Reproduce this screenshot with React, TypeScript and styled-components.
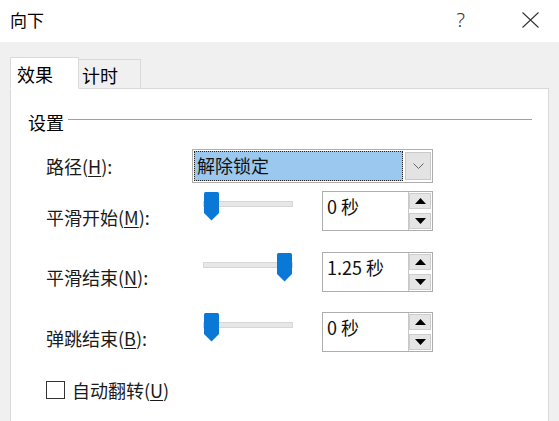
import styled, { createGlobalStyle } from 'styled-components';

const GlobalStyle = createGlobalStyle`
  html, body {
    margin: 0;
    padding: 0;
    background: #f0f0f0;
  }
  body {
    font-family: "Noto Sans CJK SC", "Noto Sans", sans-serif;
    color: #000;
  }
`;

const Window = styled.div`
  width: 559px;
  height: 421px;
  display: flex;
  flex-direction: column;
  overflow: hidden;
  background: #f0f0f0;
`;

const TitleBar = styled.div`
  height: 42px;
  flex: none;
  display: flex;
  align-items: center;
  padding: 0 20px 2px 10px;
  background: #fff;
  box-sizing: border-box;
`;

const Title = styled.div`
  flex: 1;
  font-size: 17px;
  line-height: 24px;
`;

const TitleButtons = styled.div`
  display: flex;
  align-items: center;
  gap: 57px;
  color: #333;
`;

const Help = styled.span`
  font-family: "Noto Sans", sans-serif;
  font-size: 20px;
  line-height: 24px;
  font-weight: 300;
`;

const Body = styled.div`
  flex: 1;
  display: flex;
  flex-direction: column;
  padding: 15px 10px 0 10px;
`;

const Tabs = styled.div`
  display: flex;
  align-items: flex-end;
  position: relative;
  z-index: 1;
  margin-bottom: -1px;
`;

const Tab = styled.div<{ $active?: boolean }>`
  box-sizing: border-box;
  font-size: 18px;
  line-height: 24px;
  border: 1px solid #d9d9d9;
  border-bottom: ${(p) => (p.$active ? '1px solid #fff' : 'none')};
  background: ${(p) => (p.$active ? '#fff' : '#f0f0f0')};
  height: ${(p) => (p.$active ? '32px' : '29px')};
  width: ${(p) => (p.$active ? '69px' : '63px')};
  padding: ${(p) => (p.$active ? '4px 0 0 6px' : '3px 0 0 3px')};
  margin-left: ${(p) => (p.$active ? '0' : '-1px')};
  margin-bottom: ${(p) => (p.$active ? '0' : '1px')};
`;

const Panel = styled.div`
  flex: 1;
  background: #fff;
  border: 1px solid #d9d9d9;
  border-bottom: none;
  padding: 21px 16px 0 17px;
`;

const GroupHeader = styled.div`
  display: flex;
  align-items: center;
  font-size: 18px;
  line-height: 24px;
`;

const GroupLine = styled.div`
  flex: 1;
  height: 1px;
  background: #a0a0a0;
  margin: 0 0 5px 4px;
`;

const Form = styled.div`
  display: flex;
  flex-direction: column;
  margin: 15px 0 0 18px;
`;

const Row = styled.div<{ $top: number; $center?: boolean }>`
  display: flex;
  align-items: ${(p) => (p.$center ? 'center' : 'flex-start')};
  margin-top: ${(p) => p.$top}px;
`;

const Label = styled.div<{ $offset?: number }>`
  width: 146px;
  flex: none;
  font-size: 18px;
  line-height: 24px;
  padding-top: ${(p) => p.$offset ?? 0}px;
  color: #1a1a1a;
`;

const Key = styled.span`
  text-decoration: underline;
  text-underline-offset: 2px;
`;

const Combo = styled.div`
  box-sizing: border-box;
  width: 241px;
  height: 34px;
  border: 1px solid #adadad;
  padding: 1px;
  display: flex;
  gap: 2px;
  background: #fff;
`;

const ComboValue = styled.div`
  flex: 1;
  box-sizing: border-box;
  background: #9bc8ee;
  border: 1px dotted #222;
  font-size: 18px;
  line-height: 26px;
  padding-left: 2px;
  color: #111;
`;

const ComboButton = styled.div`
  box-sizing: border-box;
  width: 26px;
  margin: 1px 0;
  background: #e3e3e3;
  border: 1px solid #cacaca;
  display: flex;
  align-items: center;
  justify-content: center;
`;

const SliderTrackArea = styled.div`
  position: relative;
  width: 90px;
  height: 29px;
  margin: 1px 0 0 11px;
  flex: none;
`;

const Track = styled.div`
  position: absolute;
  left: 0;
  right: 0;
  top: 9px;
  height: 6px;
  box-sizing: border-box;
  background: #e7e7e7;
  border: 1px solid #d6d6d6;
`;

const Thumb = styled.svg`
  position: absolute;
  top: 0;
  width: 15px;
  height: 29px;
`;

const Spin = styled.div`
  box-sizing: border-box;
  width: 111px;
  height: 40px;
  margin-left: 29px;
  border: 1px solid #adadad;
  display: flex;
  background: #fff;
`;

const SpinText = styled.div`
  flex: 1;
  font-size: 18px;
  line-height: 24px;
  padding: 2px 0 0 4px;
  color: #111;
`;

const SpinButtons = styled.div`
  width: 24px;
  box-sizing: border-box;
  border-left: 1px solid #c8c8c8;
  display: flex;
  flex-direction: column;
  justify-content: space-between;
  padding: 1px 1px 1px 0;
`;

const SpinButton = styled.div`
  height: 16px;
  box-sizing: border-box;
  background: #e5e5e5;
  border: 1px solid #cdcdcd;
  display: flex;
  align-items: center;
  justify-content: center;
`;

const CheckRow = styled.div`
  display: flex;
  align-items: center;
  margin-top: 26px;
`;

const CheckBox = styled.div`
  width: 19px;
  height: 18px;
  box-sizing: border-box;
  border: 1px solid #333;
  background: #fff;
`;

const CheckLabel = styled.div`
  margin-left: 7px;
  font-size: 18px;
  line-height: 24px;
  color: #1a1a1a;
`;

function Slider({ value }: { value: number }) {
  const left = 1 + value * 73;
  return (
    <SliderTrackArea>
      <Track />
      <Thumb style={{ left }} viewBox="0 0 15 29">
        <path d="M1.5 0H13.5Q15 0 15 1.5V21L7.5 28.5L0 21V1.5Q0 0 1.5 0Z" fill="#0a78d7" />
      </Thumb>
    </SliderTrackArea>
  );
}

function Arrow({ up }: { up?: boolean }) {
  return (
    <svg width="11" height="6" viewBox="0 0 11 6">
      <path d={up ? 'M0 6L5.5 0L11 6Z' : 'M0 0L5.5 6L11 0Z'} fill="#000" />
    </svg>
  );
}

function SpinBox({ value }: { value: string }) {
  return (
    <Spin>
      <SpinText>{value}</SpinText>
      <SpinButtons>
        <SpinButton>
          <Arrow up />
        </SpinButton>
        <SpinButton>
          <Arrow />
        </SpinButton>
      </SpinButtons>
    </Spin>
  );
}

const rows = [
  { name: '平滑开始', key: 'M', value: 0, text: '0 秒', top: 8, offset: 14 },
  { name: '平滑结束', key: 'N', value: 1, text: '1.25 秒', top: 21, offset: 13 },
  { name: '弹跳结束', key: 'B', value: 0, text: '0 秒', top: 20, offset: 14 },
];

export default function App() {
  return (
    <>
      <GlobalStyle />
      <Window>
        <TitleBar>
          <Title>向下</Title>
          <TitleButtons>
            <Help>?</Help>
            <svg width="17" height="16" viewBox="0 0 17 16">
              <path d="M0.5 0.5L16.5 15.5M16.5 0.5L0.5 15.5" stroke="#333" strokeWidth="1.1" />
            </svg>
          </TitleButtons>
        </TitleBar>
        <Body>
          <Tabs>
            <Tab $active>效果</Tab>
            <Tab>计时</Tab>
          </Tabs>
          <Panel>
            <GroupHeader>
              设置
              <GroupLine />
            </GroupHeader>
            <Form>
              <Row $top={0} $center>
                <Label>
                  路径(<Key>H</Key>):
                </Label>
                <Combo>
                  <ComboValue>解除锁定</ComboValue>
                  <ComboButton>
                    <svg width="11" height="7" viewBox="0 0 11 7">
                      <path d="M0.5 0.5L5.5 5.5L10.5 0.5" fill="none" stroke="#666" strokeWidth="1" />
                    </svg>
                  </ComboButton>
                </Combo>
              </Row>
              {rows.map((r) => (
                <Row key={r.key} $top={r.top}>
                  <Label $offset={r.offset}>
                    {r.name}(<Key>{r.key}</Key>):
                  </Label>
                  <Slider value={r.value} />
                  <SpinBox value={r.text} />
                </Row>
              ))}
              <CheckRow>
                <CheckBox />
                <CheckLabel>
                  自动翻转(<Key>U</Key>)
                </CheckLabel>
              </CheckRow>
            </Form>
          </Panel>
        </Body>
      </Window>
    </>
  );
}
